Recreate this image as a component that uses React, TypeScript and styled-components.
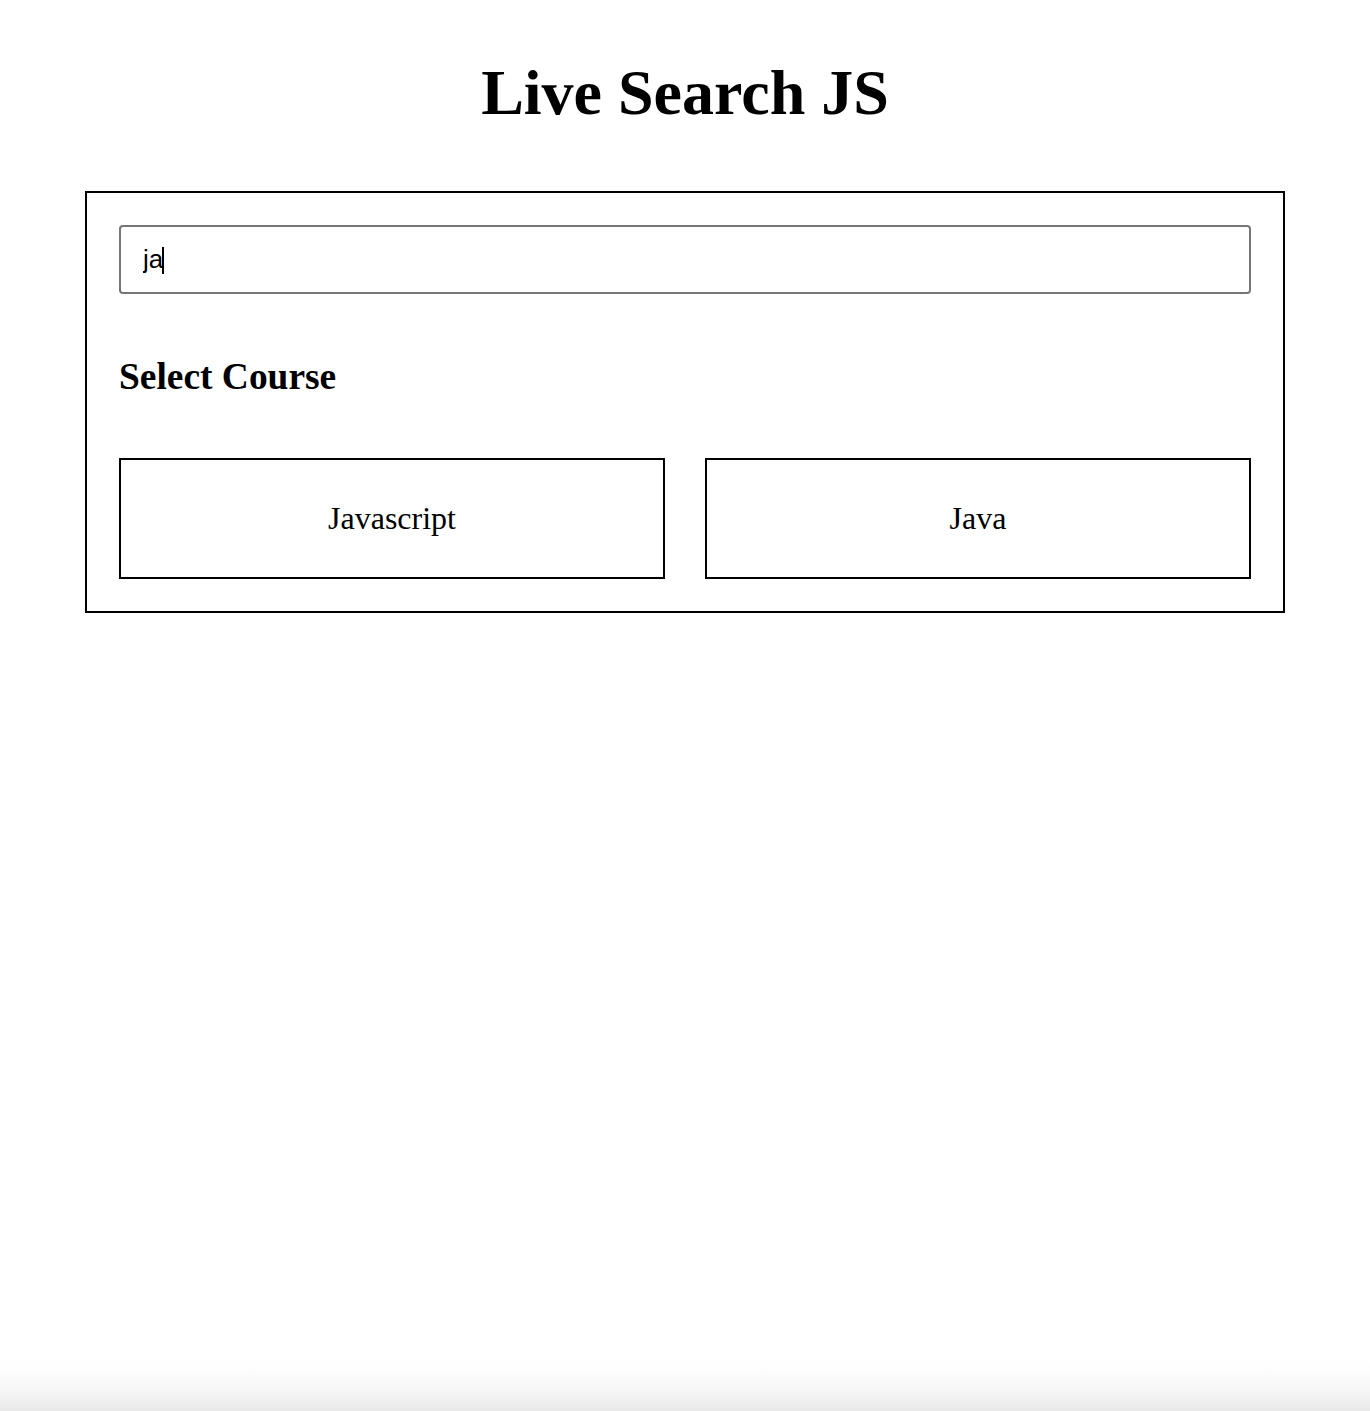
import React, { useState } from "react";
import styled, { createGlobalStyle } from "styled-components";

const GlobalStyle = createGlobalStyle`
  html, body {
    margin: 0;
    padding: 0;
    height: 100%;
  }
  html {
    background: linear-gradient(to bottom, #ffffff calc(100% - 56px), #fdfdfd calc(100% - 40px), #f4f4f4 calc(100% - 16px), #e8e8e8 100%);
  }
  body {
    background: transparent;
    font-family: "Liberation Serif", "Times New Roman", serif;
    color: #000;
  }
`;

const Page = styled.main`
  display: flex;
  flex-direction: column;
  align-items: center;
  padding-top: 61px;
`;

const Title = styled.h1`
  margin: 0 0 66px;
  font-family: "Liberation Serif", "Times New Roman", serif;
  font-size: 64px;
  line-height: 64px;
  font-weight: 700;
  text-align: center;
`;

const Panel = styled.section`
  box-sizing: border-box;
  width: 1200px;
  border: 2px solid #000;
  padding: 32px;
  display: flex;
  flex-direction: column;
`;

const SearchField = styled.div`
  position: relative;
  width: 100%;
`;

const SearchInput = styled.input`
  box-sizing: border-box;
  display: block;
  width: 100%;
  height: 69px;
  border: 2px solid #767676;
  border-radius: 4px;
  padding: 0 20px 0 22px;
  font-family: "Liberation Sans", Arial, sans-serif;
  font-size: 26px;
  color: #000;
  background: #fff;
  outline: none;
  caret-color: transparent;
`;

const Caret = styled.span`
  position: absolute;
  left: 43px;
  top: 22px;
  width: 2px;
  height: 27px;
  background: #000;
  pointer-events: none;
`;

const SectionTitle = styled.h3`
  margin: 61px 0 59px;
  font-family: "Liberation Serif", "Times New Roman", serif;
  font-size: 37.44px;
  line-height: 44px;
  font-weight: 700;
`;

const CourseGrid = styled.div`
  display: grid;
  grid-template-columns: 1fr 1fr;
  gap: 40px;
`;

const CourseCard = styled.div`
  box-sizing: border-box;
  height: 121px;
  border: 2px solid #000;
  display: flex;
  align-items: center;
  justify-content: center;
  font-family: "Liberation Serif", "Times New Roman", serif;
  font-size: 32px;
`;

const courses = ["Javascript", "Java", "Python", "PHP", "C++", "Ruby"];

export default function App() {
  const [query, setQuery] = useState("ja");
  const filtered = courses.filter((c) =>
    c.toLowerCase().includes(query.toLowerCase())
  );

  return (
    <>
      <GlobalStyle />
      <Page>
        <Title>Live Search JS</Title>
        <Panel>
          <SearchField>
            <SearchInput
              autoFocus
              value={query}
              onChange={(e) => setQuery(e.target.value)}
            />
            {query === "ja" && <Caret />}
          </SearchField>
          <SectionTitle>Select Course</SectionTitle>
          <CourseGrid>
            {filtered.map((c) => (
              <CourseCard key={c}>{c}</CourseCard>
            ))}
          </CourseGrid>
        </Panel>
      </Page>
    </>
  );
}
